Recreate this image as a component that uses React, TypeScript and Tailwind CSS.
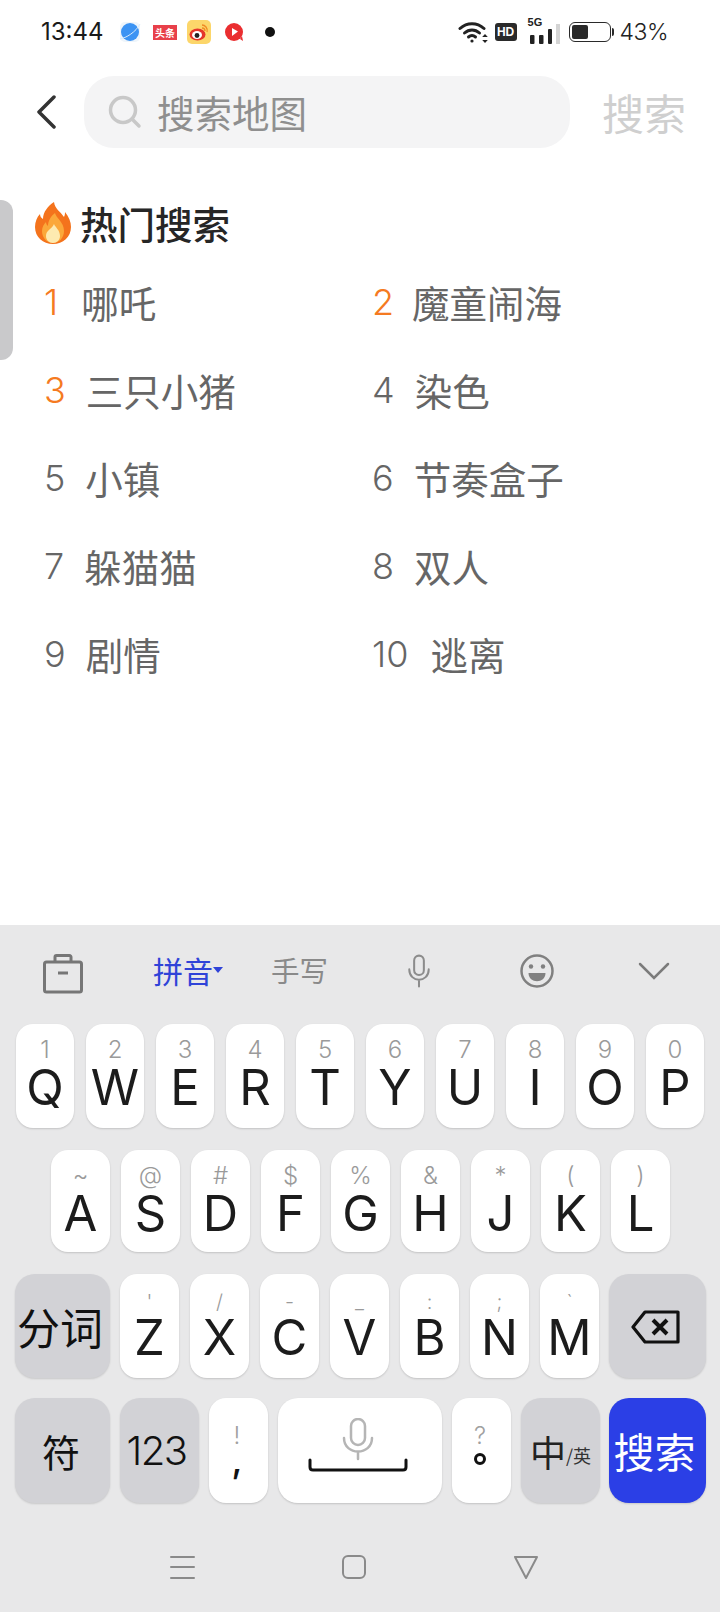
import React from "react";

const cjk = { fontFamily: '"Noto Sans CJK SC", sans-serif' };
const latin = { fontFamily: 'Inter, "Noto Sans CJK SC", sans-serif' };

function Wifi() {
  return (
    <svg width="30" height="24" viewBox="0 0 30 24" fill="none" stroke="#222" strokeWidth="3" strokeLinecap="round">
      <path d="M2 8.5C9 2 19 2 26 8.5" />
      <path d="M6.5 13C11 9 17 9 21.5 13" />
      <path d="M10.5 17C12.8 15 15.2 15 17.5 17" />
      <circle cx="14" cy="21" r="1.6" fill="#222" stroke="none" />
      <path d="M27 14l-2.800 3h5.600zM27 23l-2.800-3h5.600z" fill="#222" stroke="none" />
    </svg>
  );
}

function Signal() {
  return (
    <svg width="32" height="24" viewBox="0 0 32 24">
      <rect x="2" y="13" width="4.500" height="9" rx="1" fill="#222" />
      <rect x="11" y="13" width="4.500" height="9" rx="1" fill="#222" />
      <rect x="20" y="7" width="4" height="15" rx="1" fill="#222" />
      <rect x="28" y="2" width="4" height="20" fill="#d4d4d4" />
    </svg>
  );
}

function Flame() {
  return (
    <svg width="36" height="42" viewBox="0 0 36 42">
      <path d="M19 0c1 7 6 9 10 15 1-2 1-4 1-5 4 5 6 10 6 15 0 10-8 17-18 17S0 35 0 25c0-5 2-10 5-13 0 2 1 4 3 5C8 10 13 4 19 0z" fill="#f4731c" />
      <path d="M20 11c1 5 9 9 9 18 0 7-5 12-11 12S7 36 7 29c0-4 2-7 4-9 0 2 1 3 2 4 0-5 3-10 7-13z" fill="#fba83a" />
      <path d="M19 22c1 3 6 6 6 12 0 4-3 7-7 7s-7-3-7-7c0-6 6-7 8-12z" fill="#fdeab0" />
    </svg>
  );
}

function Rank({ n, t, hot, gap = "gap-[20px]" }: { n: string; t: string; hot?: boolean; gap?: string }) {
  return (
    <div className={`flex items-center h-[88px] ${gap}`}>
      <span className={`text-[36px] font-light ${hot ? "text-[#f57a21]" : "text-[#666666]"}`} style={latin}>{n}</span>
      <span className="text-[37.500px] text-[#666666]" style={cjk}>{t}</span>
    </div>
  );
}

function Key({ sub, l, w = "w-[58px]", subCls = "text-[24px] h-[30px]" }: { sub: string; l: string; w?: string; subCls?: string }) {
  return (
    <div className={`${w} h-full bg-white rounded-[17px] shadow-[0_1px_2px_rgba(0,0,0,0.16)] flex flex-col items-center pt-[11px]`} style={latin}>
      <span className={`${subCls} leading-[30px] text-[#9a9a9a] font-light`}>{sub}</span>
      <span className="text-[49px] leading-[44px] text-[#1c1c1c] mt-[1px] font-normal">{l}</span>
    </div>
  );
}

function FnKey({ w, children, blue }: { w: string; children: React.ReactNode; blue?: boolean }) {
  return (
    <div className={`${w} h-full rounded-[20px] flex items-center justify-center shadow-[0_1px_2px_rgba(0,0,0,0.14)] ${blue ? "bg-[#2b3fe6] text-white" : "bg-[#d2d2d6] text-[#111111]"}`}>
      {children}
    </div>
  );
}

function Punct({ sub, main }: { sub: string; main: React.ReactNode }) {
  return (
    <div className="w-[59px] h-full bg-white rounded-[17px] shadow-[0_1px_2px_rgba(0,0,0,0.16)] flex flex-col items-center pt-[24px] pr-[3px]" style={latin}>
      <span className="text-[24px] leading-[28px] text-[#a0a0a0] font-light">{sub}</span>
      {main}
    </div>
  );
}

export default function App() {
  const row1 = [["1","Q"],["2","W"],["3","E"],["4","R"],["5","T"],["6","Y"],["7","U"],["8","I"],["9","O"],["0","P"]];
  const row2 = [["~","A"],["@","S"],["#","D"],["$","F"],["%","G"],["&","H"],["*","J"],["(","K"],[")","L"]];
  const row3 = [["'","Z"],["/","X"],["-","C"],["_","V"],[":","B"],[";","N"],["`","M"]];
  return (
    <div className="w-[720px] h-[1612px] bg-white flex flex-col overflow-hidden relative" style={cjk}>
      <div className="h-[64px] flex items-center pl-[41px] pr-[52px] shrink-0">
        <span className="text-[24px] text-[#1a1a1a] w-[77px]" style={latin}>13:44</span>
        <svg width="24" height="24" viewBox="0 0 24 24" className="mr-[11px]">
          <rect x="2" y="2" width="20" height="20" rx="5" fill="#eef5fb" />
          <circle cx="12" cy="12" r="9" fill="#3b93f3" />
          <path d="M2 19C8 18 18 12 22 4" stroke="#d8ebfb" strokeWidth="1" fill="none" />
        </svg>
        <span className="w-[24px] h-[15px] mr-[10px] bg-[#e8404a] text-white text-[10px] leading-[15px] text-center font-bold overflow-hidden">头条</span>
        <svg width="24" height="24" viewBox="0 0 24 24" className="mr-[12px]">
          <rect width="24" height="24" rx="5" fill="#fcd66a" />
          <ellipse cx="10.500" cy="14.500" rx="8" ry="6" fill="#e5352b" />
          <ellipse cx="10" cy="15" rx="5" ry="4" fill="#fff" />
          <circle cx="10" cy="15.500" r="2.400" fill="#222" />
          <path d="M15 5c3 0 6 3 5 7M15 8c2 0 3 1.500 3 3" stroke="#f08a24" strokeWidth="1.300" fill="none" />
        </svg>
        <svg width="20" height="20" viewBox="0 0 20 20" className="mr-[21px] ml-[1px]">
          <circle cx="10" cy="10" r="9" fill="#ea2e30" />
          <path d="M16 17l3 2-1-5z" fill="#ea2e30" />
          <path d="M8 6l6 3.500-6 4.500z" fill="#fff" />
        </svg>
        <span className="w-[10px] h-[10px] rounded-full bg-[#111111]" />
        <div className="flex-1" />
        <div className="mr-[7px]"><Wifi /></div>
        <span className="w-[22px] h-[18px] mr-[11px] rounded-[3px] bg-[#2a2a2a] text-white text-[12px] leading-[18px] text-center font-bold" style={{ fontFamily: '"Liberation Sans", sans-serif' }}>HD</span>
        <div className="relative w-[32px] h-[28px] mr-[8px] flex items-end">
          <Signal />
          <span className="absolute left-[0px] top-[-3px] text-[11px] leading-[14px] font-bold text-[#222222]" style={{ fontFamily: '"Liberation Sans", sans-serif' }}>5G</span>
        </div>
        <div className="w-[42px] h-[20px] rounded-[6px] border-[1.500px] border-[#2a2a2a] p-[2px] relative ml-[1px]">
          <div className="w-[16px] h-full rounded-[2px] bg-[#2a2a2a]" />
        </div>
        <span className="w-[2px] h-[8px] bg-[#2a2a2a] ml-[1px] rounded-r-[2px]" />
        <span className="text-[23px] font-light text-[#222222] ml-[6px] tracking-[-0.5px]" style={latin}>43%</span>
      </div>

      <div className="h-[84px] pt-[12px] flex items-start shrink-0">
        <div className="w-[84px] h-[72px] flex items-center pl-[36px]">
          <svg width="20" height="34" viewBox="0 0 20 34" fill="none" stroke="#333" strokeWidth="3.500" strokeLinecap="round" strokeLinejoin="round">
            <path d="M18 2L3 17l15 15" />
          </svg>
        </div>
        <div className="w-[486px] h-[72px] rounded-[30px] bg-[#f4f4f5] flex items-center pl-[24px]">
          <svg width="34" height="34" viewBox="0 0 34 34" fill="none" stroke="#c8c8c8" strokeWidth="3.500" strokeLinecap="round" className="mr-[15px]">
            <circle cx="15" cy="15" r="12.500" />
            <path d="M25 25l6 6" />
          </svg>
          <span className="text-[37.500px] text-[#8f8f8f]">搜索地图</span>
        </div>
        <span className="text-[42px] leading-[72px] text-[#cfcfcf] ml-[32px]">搜索</span>
      </div>

      <div className="pl-[35px] pt-[50px] flex items-center h-[100px] shrink-0">
        <Flame />
        <span className="text-[37.500px] font-medium text-[#262626] ml-[9px]">热门搜索</span>
      </div>

      <div className="pl-[44px] grid grid-cols-[328px_1fr] mt-[10px] shrink-0">
        <Rank n="1" t="哪吒" hot gap="gap-[23px]" />
        <Rank n="2" t="魔童闹海" hot gap="gap-[18px]" />
        <Rank n="3" t="三只小猪" hot />
        <Rank n="4" t="染色" />
        <Rank n="5" t="小镇" />
        <Rank n="6" t="节奏盒子" />
        <Rank n="7" t="躲猫猫" />
        <Rank n="8" t="双人" />
        <Rank n="9" t="剧情" />
        <Rank n="10" t="逃离" gap="gap-[22px]" />
      </div>

      <div className="flex-1" />

      <div className="h-[687px] bg-[#e8e8e9] shrink-0 flex flex-col">
        <div className="h-[99px] flex items-center relative shrink-0 pb-[8px]">
          <svg width="40" height="40" viewBox="0 0 40 40" fill="none" stroke="#767676" strokeWidth="3" className="ml-[43px] mt-[6px]">
            <rect x="1.500" y="8" width="37" height="30" rx="2" />
            <path d="M12 8V3a1.500 1.500 0 0 1 1.500-1.500h13A1.500 1.500 0 0 1 28 3v5" />
            <path d="M15 19h10" />
          </svg>
          <span className="ml-[70px] text-[30px] text-[#2f43d8]">拼音</span>
          <svg width="10" height="6" viewBox="0 0 10 6" className="mt-[-2px]"><path d="M0 0h10L5 6z" fill="#2f43d8" /></svg>
          <span className="ml-[48px] text-[28.500px] text-[#8a8a8a]">手写</span>
          <svg width="24" height="34" viewBox="0 0 28 42" fill="none" stroke="#8c8c8c" strokeWidth="2.500" strokeLinecap="round" className="ml-[79px]">
            <rect x="8" y="2" width="12" height="24" rx="6" />
            <path d="M2 19c0 17 24 17 24 0M14 33v7" />
          </svg>
          <svg width="36" height="36" viewBox="0 0 36 36" fill="none" className="ml-[88px]">
            <circle cx="18" cy="18" r="15.500" stroke="#808080" strokeWidth="2.500" />
            <circle cx="12" cy="13.500" r="2.200" fill="#808080" />
            <circle cx="24" cy="13.500" r="2.200" fill="#808080" />
            <path d="M9.500 20h17c0 11-17 11-17 0z" fill="#808080" />
          </svg>
          <svg width="34" height="20" viewBox="0 0 34 20" fill="none" stroke="#7b7b7b" strokeWidth="2.500" strokeLinecap="round" className="ml-[82px]">
            <path d="M3 3l14 14L31 3" />
          </svg>
        </div>

        <div className="h-[104px] flex gap-[12px] pl-[16px] shrink-0">
          {row1.map(([s, l]) => <Key key={l} sub={s} l={l} />)}
        </div>
        <div className="h-[102px] mt-[22px] flex gap-[11px] pl-[51px] shrink-0">
          {row2.map(([s, l]) => <Key key={l} sub={s} l={l} w="w-[59px]" />)}
        </div>
        <div className="h-[104px] mt-[22px] flex gap-[11px] pl-[15px] shrink-0">
          <div className="mr-[-1px]">
            <div className="h-[104px] flex">
              <FnKey w="w-[95px]"><span className="text-[43px] leading-none whitespace-nowrap mr-[5px]">分词</span></FnKey>
            </div>
          </div>
          {row3.map(([s, l]) => <Key key={l} sub={s} l={l} w="w-[59px]" subCls="text-[20px] h-[30px] pt-[2px]" />)}
          <div className="ml-[-1px] h-full">
            <FnKey w="w-[97px]">
              <svg width="50" height="34" viewBox="0 0 50 34" fill="none" stroke="#111" strokeWidth="3.200" strokeLinejoin="round" className="mr-[4px] mt-[2px]">
                <path d="M14 2h33v30H14L2 17z" />
                <path d="M22 10l14 14M36 10L22 24" strokeWidth="4" />
              </svg>
            </FnKey>
          </div>
        </div>
        <div className="h-[105px] mt-[20px] flex gap-[10px] pl-[15px] shrink-0">
          <FnKey w="w-[95px]"><span className="text-[38px] mr-[3px]">符</span></FnKey>
          <FnKey w="w-[79px]"><span className="text-[40px] font-light tracking-[-1.500px] mr-[6px]" style={latin}>123</span></FnKey>
          <Punct sub="!" main={<span className="text-[36px] leading-[20px] text-[#111111] font-medium">,</span>} />
          <div className="w-[164px] h-full bg-white rounded-[20px] shadow-[0_1px_2px_rgba(0,0,0,0.16)] flex items-center justify-center">
            <svg width="100" height="58" viewBox="0 0 100 58" fill="none" className="mt-[-8px] mr-[5px]">
              <rect x="43" y="1" width="14" height="26" rx="7" stroke="#b5b5b5" strokeWidth="2.500" />
              <path d="M36 20c0 18 28 18 28 0M50 34v7" stroke="#b5b5b5" strokeWidth="2.500" strokeLinecap="round" />
              <path d="M2 42v7c0 2 1 3 3 3h90c2 0 3-1 3-3v-7" stroke="#111" strokeWidth="3" strokeLinecap="round" />
            </svg>
          </div>
          <Punct sub="?" main={<span className="w-[12px] h-[12px] rounded-full border-[3px] border-[#111111] mt-[3px]" />} />
          <FnKey w="w-[79px]">
            <span className="text-[36px] text-[#222222] leading-none">中</span>
            <span className="text-[18px] text-[#333333] leading-none mt-[8px]">/英</span>
          </FnKey>
          <div className="ml-[-1px] h-full">
            <FnKey w="w-[97px]" blue><span className="text-[41px] leading-none whitespace-nowrap mr-[6px]">搜索</span></FnKey>
          </div>
        </div>

        <div className="flex-1 flex items-center pl-[169px] pt-[18px]">
          <svg width="26" height="26" viewBox="0 0 26 26" stroke="#8a8a8a" strokeWidth="2" strokeLinecap="round">
            <path d="M2 3h23M2 13h23M2 24h23" />
          </svg>
          <svg width="26" height="26" viewBox="0 0 26 26" fill="none" stroke="#8a8a8a" strokeWidth="2" className="ml-[146px]">
            <rect x="2" y="2" width="22" height="22" rx="5" />
          </svg>
          <svg width="26" height="26" viewBox="0 0 26 26" fill="none" stroke="#8a8a8a" strokeWidth="2" strokeLinejoin="round" className="ml-[146px]">
            <path d="M2 3h22L13 24z" />
          </svg>
        </div>
      </div>

      <div className="absolute left-0 top-[200px] w-[13px] h-[160px] bg-[#c9c9cb] rounded-r-[12px]" />
    </div>
  );
}
